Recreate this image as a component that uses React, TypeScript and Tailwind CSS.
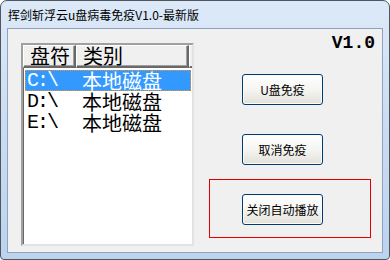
const cjk = "font-['Noto_Sans_CJK_SC','Noto_Sans',sans-serif]";

const drives = [
  { letter: "C:\\", kind: "本地磁盘", selected: true },
  { letter: "D:\\", kind: "本地磁盘", selected: false },
  { letter: "E:\\", kind: "本地磁盘", selected: false },
];

function WinButton({ label }: { label: string }) {
  return (
    <button
      className={`w-[81px] h-[31px] rounded-[3px] border border-[#003c74] bg-gradient-to-b from-[#ffffff] via-[#f5f5f2] to-[#e2e0d8] shadow-[inset_0_0_0_1px_#fbfbfb] text-[12px] leading-none text-black flex items-center justify-center ${cjk}`}
    >
      {label}
    </button>
  );
}

function DriveList() {
  return (
    <div className="ml-[13px] mt-[14px] w-[173px] h-[203px] bg-white border-2 border-t-[#a0a0a0] border-l-[#a0a0a0] border-r-[#e3e3e3] border-b-[#e3e3e3] shadow-[inset_1px_1px_0_#696969] flex flex-col">
      {/* 表头 */}
      <div className={`flex h-[23px] text-[20px] leading-[20px] text-black ${cjk}`}>
        <div className="w-[53px] h-full bg-[#f0f0f0] border-t border-l border-t-white border-l-white border-b-2 border-r-2 border-b-[#696969] border-r-[#696969] shadow-[inset_-1px_-1px_0_#a0a0a0] flex items-center pl-[6px]">
          盘符
        </div>
        <div className="w-[113px] h-full bg-[#f0f0f0] border-t border-l border-t-white border-l-white border-b-2 border-r-2 border-b-[#696969] border-r-[#696969] shadow-[inset_-1px_-1px_0_#a0a0a0] flex items-center pl-[6px]">
          类别
        </div>
        <div className="flex-1 h-full bg-[#f0f0f0] border-t border-l border-t-white border-l-white border-b-2 border-b-[#696969]" />
      </div>

      {/* 驱动器列表 */}
      <div className="mt-[2px] flex flex-col">
        {drives.map((d) => (
          <div
            key={d.letter}
            className={`ml-[2px] mr-[1px] h-[21px] flex items-center ${
              d.selected
                ? "bg-[#3399ff] text-white border border-dotted border-[#f0922a]"
                : "text-black border border-transparent"
            }`}
          >
            <span className="w-[56px] pl-[1px] font-['Liberation_Mono',monospace] text-[20px] tracking-[-2px] leading-[19px]">
              {d.letter}
            </span>
            <span className={`text-[20px] leading-[19px] ${cjk}`}>{d.kind}</span>
          </div>
        ))}
      </div>
    </div>
  );
}

export default function App() {
  return (
    <div className="w-[390px] h-[260px] bg-white">
      <div className="w-full h-full rounded-t-[7px] rounded-b-[4px] border border-[#4f5660] bg-gradient-to-b from-[#dce9f8] via-[#cadcf2] to-[#bcd3ee] flex flex-col">
        {/* 标题栏 */}
        <div className={`h-[27px] flex items-center pl-[7px] text-[12px] text-black ${cjk}`}>
          挥剑斩浮云u盘病毒免疫V1.0-最新版
        </div>

        <div className="flex-1 px-[6px] pb-[6px] flex">
          <div className="flex-1 border border-[#8ea3bd] bg-[#f0f0f0] flex items-start">
            <DriveList />

            <div className="flex-1 flex flex-col">
              <div className="mt-[5px] pr-[7px] h-[18px] text-right font-['Liberation_Mono',monospace] font-bold text-[18px] leading-[18px] text-black">
                V1.0
              </div>
              <div className="ml-[48px] mt-[22px]">
                <WinButton label="U盘免疫" />
              </div>
              <div className="ml-[48px] mt-[29px]">
                <WinButton label="取消免疫" />
              </div>
              <div className="ml-[15px] mt-[14px] w-[162px] h-[59px] border border-[#e00000] pl-[32px] pt-[14px]">
                <WinButton label="关闭自动播放" />
              </div>
            </div>
          </div>
        </div>
      </div>
    </div>
  );
}
